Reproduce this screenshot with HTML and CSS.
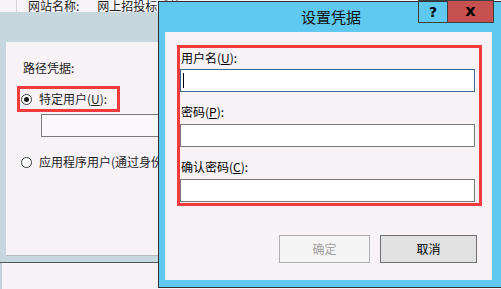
FILE: index.html
```html
<!DOCTYPE html>
<html lang="zh-CN">
<head>
	<meta charset="UTF-8">
	<title>设置凭据</title>
	<link rel="stylesheet" href="styles.css">
</head>
<body>
	<div class="bg-window">
		<div class="site-bar">
			<span class="site-sep"></span>
			<span class="site-label">网站名称:</span>
			<span class="site-name">网上招投标系统</span>
		</div>
		<div class="bg-frame">
			<div class="bg-panel">
				<div class="bg-title">路径凭据:</div>
				<div class="bg-option bg-option-marked"><span class="radio checked"></span>特定用户(<u>U</u>):</div>
				<div class="bg-input"></div>
				<div class="bg-option bg-option-app"><span class="radio"></span>应用程序用户(通过身份验证)</div>
			</div>
		</div>
		<div class="bg-bottom"></div>
	</div>

	<div class="dialog">
		<div class="titlebar">
			<span class="title">设置凭据</span>
			<div class="caption-buttons">
				<span class="cap-btn help">?</span>
				<span class="cap-btn close">x</span>
			</div>
		</div>
		<div class="content">
			<div class="marked-box">
				<div class="field-label first">用户名(<u>U</u>):</div>
				<div class="text-input focused"><span class="caret"></span></div>
				<div class="field-label">密码(<u>P</u>):</div>
				<div class="text-input"></div>
				<div class="field-label">确认密码(<u>C</u>):</div>
				<div class="text-input"></div>
			</div>
			<div class="buttons">
				<span class="btn disabled">确定</span>
				<span class="btn cancel">取消</span>
			</div>
		</div>
	</div>
</body>
</html>
```

FILE: styles.css
```css
*{
	margin: 0;
	padding: 0;
	box-sizing: border-box;
}
body{
	width: 501px;
	height: 289px;
	overflow: hidden;
	position: relative;
	font-family: "Noto Sans CJK SC", "Microsoft YaHei", sans-serif;
	font-size: 12px;
	color: #000;
	background: #f6f2f6;
}
u{
	text-decoration: underline;
	text-underline-offset: 1px;
}

/* window behind the dialog */
.bg-window{
	height: 289px;
	display: flex;
	flex-direction: column;
}
.site-bar{
	height: 12px;
	overflow: hidden;
	display: flex;
	align-items: flex-end;
	background: #f7f4f7;
	color: #1e1e1e;
	white-space: nowrap;
}
.site-bar span{
	line-height: 16px;
	margin-bottom: -2px;
}
.site-sep{
	width: 1px;
	height: 16px;
	background: #d4d4d4;
	margin-left: 16px;
}
.site-label{
	margin-left: 11px;
}
.site-name{
	margin-left: 18px;
}
.bg-frame{
	height: 251px;
	background: #c6d7de;
	padding: 30px 0 0 6px;
	border-bottom: 1px solid #4e575c;
}
.bg-panel{
	width: 160px;
	height: 213px;
	background: #f6f2f6;
	box-shadow: 0 1px 0 #b9bcbf;
	padding-top: 18px;
	color: #1e1e1e;
	white-space: nowrap;
}
.bg-title{
	line-height: 16px;
	padding-left: 17px;
}
.bg-option{
	display: flex;
	align-items: center;
	line-height: 16px;
}
.bg-option-marked{
	width: 103px;
	height: 26px;
	margin: 10px 0 0 11px;
	border: 3px solid #ef3a3e;
	padding-left: 1px;
}
.bg-option-app{
	margin: 17px 0 0 15px;
}
.radio{
	width: 11px;
	height: 11px;
	border: 1px solid #3a3a3a;
	border-radius: 50%;
	background: #fff;
	margin-right: 7px;
	position: relative;
	flex: none;
}
.radio.checked::after{
	content: "";
	position: absolute;
	left: 2px;
	top: 2px;
	width: 5px;
	height: 5px;
	border-radius: 50%;
	background: #1a1a1a;
}
.bg-input{
	margin: 2px 0 0 35px;
	height: 23px;
	border: 1px solid #7a7a7a;
	border-right: none;
	background: #faf8fa;
}
.bg-bottom{
	flex: 1;
	background: #f6f2f6;
	border-left: 2px solid #c4cfdc;
}

/* dialog */
.dialog{
	position: absolute;
	left: 158px;
	top: 1px;
	width: 343px;
	height: 287px;
	border: 1px solid #2e3337;
	border-right: none;
	background: #60c9ef;
	padding: 0 0 7px 6px;
	display: flex;
	flex-direction: column;
}
.titlebar{
	height: 30px;
	display: flex;
	align-items: center;
	justify-content: center;
	position: relative;
	margin-left: -6px;
}
.title{
	font-size: 15px;
	line-height: 20px;
	color: #111;
	margin-left: 2px;
}
.caption-buttons{
	position: absolute;
	top: -2px;
	right: 7px;
	display: flex;
}
.cap-btn{
	height: 23px;
	border: 1px solid #3a3f44;
	display: flex;
	align-items: center;
	justify-content: center;
	font-family: "DejaVu Sans", sans-serif;
	font-weight: bold;
	color: #000;
}
.help{
	width: 29px;
	border-right: none;
	font-size: 14px;
}
.close{
	width: 47px;
	background: #c75050;
	font-size: 16px;
	padding-bottom: 2px;
}
.content{
	width: 327px;
	height: 248px;
	background: #f6f2f6;
	padding: 13px 0 0 12px;
}
.marked-box{
	width: 305px;
	height: 161px;
	border: 3px solid #ef3a3e;
	padding: 0 4px 1px 0;
}
.field-label{
	line-height: 16px;
	padding: 12px 0 4px 1px;
}
.field-label.first{
	padding: 2px 0 3px 1px;
}
.text-input{
	height: 23px;
	border: 1px solid #7a7a7a;
	background: #fff;
	position: relative;
}
.text-input.focused{
	border-color: #3c6994;
}
.caret{
	position: absolute;
	left: 2px;
	top: 3px;
	width: 1px;
	height: 15px;
	background: #000;
}
.buttons{
	display: flex;
	justify-content: flex-end;
	gap: 10px;
	margin-top: 29px;
	padding-right: 15px;
}
.btn{
	height: 28px;
	display: flex;
	align-items: center;
	justify-content: center;
	border: 1px solid #707070;
	background: #e1e1e1;
	line-height: 16px;
}
.btn.disabled{
	width: 91px;
	border-color: #b0b0b0;
	background: #f4f4f4;
	color: #a2a2a2;
}
.btn.cancel{
	width: 97px;
}
```
